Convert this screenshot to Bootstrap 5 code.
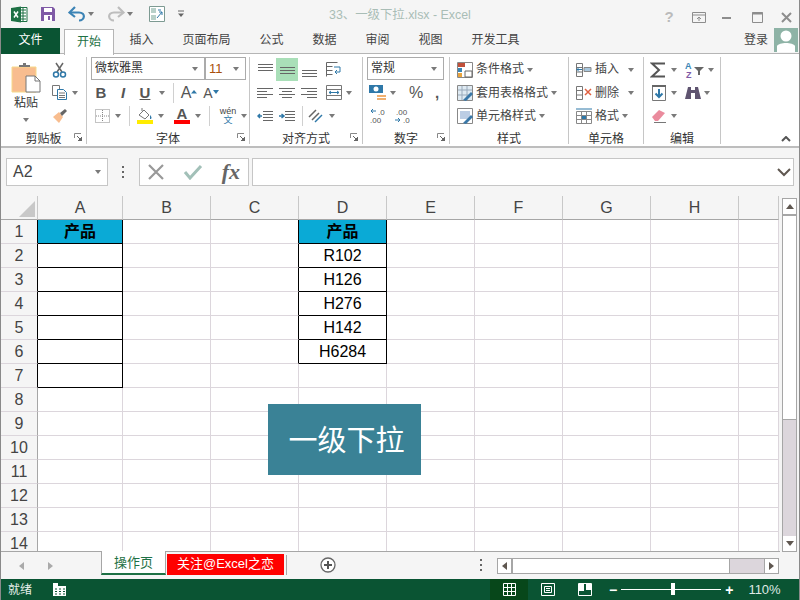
<!DOCTYPE html>
<html lang="zh"><head><meta charset="utf-8"><title>33、一级下拉.xlsx - Excel</title>
<link href="https://cdn.jsdelivr.net/npm/bootstrap@5.3.0/dist/css/bootstrap.min.css" rel="stylesheet">
<style>
html,body{margin:0;height:600px;overflow:hidden;background:#f5f5f5}
body{font:12px/1.2 "Liberation Sans","Noto Sans CJK SC",sans-serif;color:#444}
.xwin{width:800px;height:600px;border-left:1px solid #8a8a8a;border-right:1px solid #8a8a8a;position:relative;overflow:hidden}
svg{display:block;flex:none}
.titlebar{height:28px;flex:none;position:relative}
.qat{padding-left:10px}
.doctitle{position:absolute;left:328px;top:7px;font-size:12.4px;color:#a9bdb6;white-space:nowrap;line-height:16px}
.winbtns{position:absolute;right:7px;top:6px}
.tabrow{height:26px;flex:none;border-bottom:1px solid #b5b5b5}
.rtab{padding:0 14.5px;line-height:25px;height:26px;white-space:nowrap;color:#444;font-size:12px}
.rtab-file{width:59px;padding:0;text-align:center;background:#0a5433;color:#fff;margin-right:4px}
.rtab-on{width:50px;padding:0;text-align:center;background:#fff;border:1px solid #b5b5b5;border-bottom:0;color:#1e7145;line-height:24px;margin-right:1px;margin-top:1px;height:26px;z-index:1;position:relative}
.login{margin-left:auto;padding-right:6px;line-height:25px}
.avatar{width:24px;height:24px;background:#8eb3a6;margin-right:1px;overflow:hidden}
.ribbon{height:94px;flex:none;background:#fff;border-bottom:2px solid #bdbdbd}
.grp{height:87px;margin-top:3px;border-right:1px solid #c6c6c6;position:relative;flex:none}
.g1{width:86px}.g2{width:163px}.g3{width:113px}.g4{width:87px}.g5{width:119px}.g6{width:75px}.g7{width:77px}
.tools{height:70px;padding-top:1px}
.glabel{height:17px;line-height:25px;text-align:center;color:#333;white-space:nowrap}
.launch{position:absolute;right:4px;bottom:3px}
.trow{height:23.3px;display:flex;align-items:center}
.ce{display:flex;align-items:center;justify-content:center;flex:none;height:22px}
.w4{width:4px}.w5{width:5px}.w6{width:6px}.w7{width:7px}.w8{width:8px}.w10{width:10px}.w11{width:11px}.w12{width:12px}.w14{width:14px}.w16{width:16px}.w18{width:18px}.w19{width:19px}.w20{width:20px}.w22{width:22px}.w23{width:23px}.w24{width:24px}.w26{width:26px}
.ar{width:0;height:0;border:3.5px solid transparent;border-top:4px solid #7a7a7a;border-bottom:0;display:block;flex:none}
.vsep{width:1px;height:20px;background:#d0d0d0;display:block}
.dd{height:23px;border:1px solid #ababab;display:flex;align-items:center;justify-content:space-between;padding:0 6px 0 3px;background:#fff;color:#333;font-size:12px}
.dfont{width:114px;margin-left:4px;margin-top:-1px}.dsize{width:41px;margin-top:-1px;color:#a8500c;font-size:13px}
.dnum{width:77px;margin-left:4px;margin-top:-1px}
.pastewrap{width:38px;margin-left:6px;padding-top:4px}
.pal{color:#333;font-size:12px;line-height:14px;margin-top:3px}
.txt{color:#444;white-space:nowrap;margin-left:3px}
.letter{font-size:15px;line-height:1;color:#555}
.fbar{height:48px;flex:none;padding:10px 5px 10px 5px}
.namebox{width:102px;height:28px;background:#fff;border:1px solid #c6c6c6;font-size:16px;padding:0 6px;color:#444}
.fdots{width:31px;height:28px}
.fbtns{width:110px;height:28px;background:#fff;border:1px solid #c6c6c6;padding:0 8px 0 7px;margin-right:3px}
.finput{flex:1;height:28px;background:#fff;border:1px solid #c6c6c6;padding-right:2px}
.fxt{font:italic bold 22px/1 "Liberation Serif",serif;color:#666}
.sheetarea{height:356px;flex:none;position:relative}
.sheetclip{width:779px;height:356px;overflow:hidden;border-bottom:1px solid #a6a6a6;position:relative;flex:none}
table.xs{border-collapse:separate;border-spacing:0;table-layout:fixed;width:778px;margin:0}
table.xs td,table.xs th{height:24px;padding:0;border-right:1px solid #dcd6dc;border-bottom:1px solid #dcd6dc;text-align:center;font-size:16px;font-weight:400;line-height:22px;color:#000;background:#fff;overflow:hidden}
table.xs .hd{height:24px;background:#f5f5f5;color:#444;border-right:1px solid #c8c8c8;border-bottom:1px solid #a6a6a6}
table.xs .rh{background:#f5f5f5;color:#444;border-right:1px solid #a6a6a6;border-bottom:1px solid #dcd6dc;font-size:16px}
table.xs .rk{border-right-color:#000}
table.xs .kb{border-right-color:#000;border-bottom-color:#000}
table.xs .kr{border-right-color:#000}
table.xs .cy{background:#0aaad6;font-weight:700;font-size:16px}
.corner{width:0;height:0;border-left:16px solid transparent;border-bottom:16px solid #c8c8c8;margin:2px 2px 0 auto}
.banner{position:absolute;left:267px;top:208px;width:153px;height:71px;padding:4px 0 0 4px;background:#3a8296;color:#fff;font-size:29px;display:flex;align-items:center;justify-content:center}
.vscroll{width:15px;height:354px;margin:2px 0 0 2px;background:#dcd6dc;border:1px solid #a6a6a6;flex:none}
.sbtn{height:15px;background:#fff;display:flex;align-items:center;justify-content:center;flex:none}
.vthumb{height:206px;background:#fff;border-top:2px solid #a6a6a6;border-bottom:1px solid #a6a6a6;flex:none}
.tabsbar{height:27px;flex:none;position:relative}
.navarrows{width:100px;padding:0 30px 0 0}
.stab{height:24px;width:65px;text-align:center;background:#fff;line-height:24px;font-size:13px;color:#1e7145;border-left:1px solid #a6a6a6;border-right:1px solid #a6a6a6;border-bottom:2px solid #1e7145;margin-top:-1px;z-index:1;position:relative}
.stab2{height:21px;width:117px;margin:2px 2px 0 1px;background:#f00;color:#fff;text-align:center;line-height:20px;font-size:13px;white-space:nowrap}
.tsep{width:1px;height:20px;background:#a6a6a6;margin-top:3px}
.addbtn{margin-left:33px;margin-top:5px}
.tdots{margin-left:144px;margin-top:7px}
.hscroll{position:absolute;left:496px;top:6px;width:282px;height:16px;border:1px solid #a6a6a6;background:#dcd6dc}
.hb{width:14px;background:#fff;border-right:1px solid #a6a6a6;display:flex;align-items:center;justify-content:center;flex:none}
.hthumb{width:218px;background:#fff;border-left:1px solid #a6a6a6;border-right:1px solid #a6a6a6;flex:none}
.hfill{flex:1}
.hb2{width:14px;background:#fff;border-left:1px solid #a6a6a6;display:flex;align-items:center;justify-content:center;flex:none}
.statusbar{height:21px;flex:none;background:#0a5433;color:#fff;position:relative}
.stxt{padding-left:7px;width:52px;line-height:20px;color:#e8f0ec}
.vbtn{height:21px;display:flex;align-items:center;justify-content:center;flex:none}
.vb1{width:38px;background:#07471a;margin-left:424px}
.vb2{width:40px}.vb3{width:34px;margin-right:7px}
.slider{width:100px;height:1px;background:#fff;margin:0 4px;position:relative}
.thumbk{position:absolute;left:50px;top:-6px;width:4px;height:12px;background:#fff}
.zoompct{font-size:13px;color:#dfe9e4;margin-left:15px}
.szb{font:700 14px/1 "Liberation Sans",sans-serif;color:#fff}
</style></head><body>
<div class="xwin d-flex flex-column">

<div class="titlebar d-flex align-items-center qat">
 <svg width="17" height="17" viewBox="0 0 17 17"><path d="M6 1.500h10v14H6z" fill="#fff" stroke="#1e7145"/><path d="M10 4h5M10 7h5M10 10h5M10 13h5M12 2v13" stroke="#1e7145"/><path d="M0 2l10-1.500v16L0 15z" fill="#1e7145"/><path d="M3 5.500l4 6M7 5.500l-4 6" stroke="#fff" stroke-width="1.500"/></svg>
 <span class="ce w12"></span>
 <svg width="16" height="16" viewBox="0 0 16 16"><path d="M1 1h12l2 2v12H1z" fill="#7f5aa6"/><path d="M4 2h8v4H4z" fill="#fff"/><path d="M4 9h8v6H4z" fill="#fff"/><path d="M8 10h2v4H8z" fill="#7f5aa6"/></svg>
 <span class="ce w12"></span>
 <svg width="18" height="16" viewBox="0 0 18 16"><path d="M2 6.500h9c7 0 6 8 0 8" fill="none" stroke="#3b83b5" stroke-width="2.200"/><path d="M7 1L1.500 6.500 7 11" fill="none" stroke="#3b83b5" stroke-width="2.200"/></svg>
 <span class="ce w10"><i class="ar"></i></span>
 <span class="ce w11"></span>
 <svg width="18" height="16" viewBox="0 0 18 16"><path d="M16 6.500H7c-7 0-6 8 0 8" fill="none" stroke="#bdbdbd" stroke-width="2.200"/><path d="M11 1l5.500 5.500L11 11" fill="none" stroke="#bdbdbd" stroke-width="2.200"/></svg>
 <span class="ce w10"><i class="ar"></i></span>
 <span class="ce w14"></span>
 <svg width="16" height="16" viewBox="0 0 16 16"><path d="M.5.500h15v15H.500z" fill="#fff" stroke="#7d9a92"/><path d="M2 2h5v5H2zM2 9h5v5H2z" fill="#b8d0c9"/><path d="M8 12l5-6M13 6h-3M13 6v3M9 4h3" stroke="#2f78a8" fill="none"/></svg>
 <span class="ce w12"></span>
 <svg width="8" height="8" viewBox="0 0 8 8"><path d="M1 1h6" stroke="#666"/><path d="M1 3.500h6L4 7z" fill="#666"/></svg>
 <div class="doctitle">33、一级下拉.xlsx - Excel</div>
 <div class="winbtns d-flex align-items-center">
  <span class="ce w22 fw-bold" style="color:#bbb;font-size:15px">?</span>
  <span class="ce w12"></span>
  <svg width="14" height="11" viewBox="0 0 14 11"><path d="M.5.500h13v10H.500zM1 3h12" fill="none" stroke="#8d8d8d"/><path d="M7 9V5M5 7l2-2 2 2" fill="none" stroke="#8d8d8d"/></svg>
  <span class="ce w16"></span>
  <svg width="10" height="10" viewBox="0 0 10 10"><path d="M0 6h9" stroke="#8d8d8d" stroke-width="2"/></svg>
  <span class="ce w20"></span>
  <svg width="11" height="11" viewBox="0 0 11 11"><path d="M.5.500h10v10H.500z" fill="none" stroke="#8d8d8d"/><path d="M0 1.500h11" stroke="#8d8d8d" stroke-width="2"/></svg>
  <span class="ce w18"></span>
  <svg width="11" height="11" viewBox="0 0 11 11"><path d="M1 1l9 9M10 1l-9 9" stroke="#8d8d8d" stroke-width="2"/></svg>
 </div>
</div>

<nav class="tabrow d-flex">
 <div class="rtab rtab-file">文件</div><div class="rtab rtab-on">开始</div>
 <div class="rtab">插入</div><div class="rtab">页面布局</div><div class="rtab">公式</div><div class="rtab">数据</div><div class="rtab">审阅</div><div class="rtab">视图</div><div class="rtab">开发工具</div>
 <div class="login">登录</div>
 <div class="avatar"><svg width="24" height="24" viewBox="0 0 24 24"><circle cx="12" cy="8" r="5.500" fill="#fff"/><path d="M3 24v-6c2-4 16-4 18 0v6z" fill="#fff"/></svg></div>
</nav>

<div class="ribbon d-flex">
 <section class="grp g1">
  <div class="tools d-flex">
   <div class="pastewrap d-flex flex-column align-items-center">
    <svg width="30" height="31" viewBox="0 0 30 31"><path d="M1 5h24v25H1z" fill="#f8bd8f" stroke="#f6d98a"/><path d="M8 5V3h4V1h3v2h4v2z" fill="#777"/><path d="M15 14h9l5 5v11H15z" fill="#fff" stroke="#777"/><path d="M24 14v5h5" fill="none" stroke="#777"/></svg>
    <span class="pal">粘贴</span><i class="ar mt-2"></i>
   </div>
   <div class="d-flex flex-column" style="margin-left:7px">
    <div class="trow"><svg width="15" height="16" viewBox="0 0 15 16"><path d="M4 1l6 9M11 1L5 10" stroke="#666" fill="none" stroke-width="1.500"/><circle cx="4" cy="12.500" r="2.500" fill="none" stroke="#2f78a8" stroke-width="1.500"/><circle cx="11" cy="12.500" r="2.500" fill="none" stroke="#2f78a8" stroke-width="1.500"/></svg></div>
    <div class="trow"><svg width="15" height="15" viewBox="0 0 15 15"><path d="M.5.500h7v10h-7z" fill="#fff" stroke="#777"/><path d="M5.500 4.500h6l3 3v7h-9z" fill="#fff" stroke="#2f78a8"/><path d="M7 8h6M7 10.500h6M7 12.500h6" stroke="#777"/></svg><span class="ce w16"><i class="ar"></i></span></div>
    <div class="trow"><svg width="16" height="15" viewBox="0 0 16 15"><path d="M1 9l6-5 4 5-4 6z" fill="#f8bd8f"/><path d="M8 5l5-4 2 2-5 5z" fill="#666"/></svg></div>
   </div>
  </div>
  <div class="glabel">剪贴板</div>
  <svg class="launch" width="8" height="8" viewBox="0 0 8 8"><path d="M.5 5V.500H7" fill="none" stroke="#888"/><path d="M3 3l5 5M8 4v4H4z" fill="#666" stroke="#666"/></svg>
 </section>
 <section class="grp g2">
  <div class="tools">
   <div class="d-flex"><div class="dd dfont"><span>微软雅黑</span><i class="ar"></i></div><div class="dd dsize"><span>11</span><i class="ar"></i></div></div>
   <div class="trow" style="margin-top:1px;padding-left:3px">
    <span class="ce w22 fw-bold letter">B</span><span class="ce w22 fst-italic letter fw-bold">I</span><span class="ce w22 letter text-decoration-underline fw-bold">U</span><span class="ce w12"><i class="ar"></i></span><span class="ce w10"><b class="vsep"></b></span>
    <span class="ce w22"><span class="letter" style="font-size:16px">A</span><svg width="6" height="6" viewBox="0 0 6 6"><path d="M3 0l3 3.500H0z" fill="#2f78a8"/></svg></span>
    <span class="ce w22"><span class="letter" style="font-size:14px">A</span><svg width="6" height="6" viewBox="0 0 6 6"><path d="M3 4L0 0h6z" fill="#2f78a8"/></svg></span>
   </div>
   <div class="trow" style="padding-left:3px">
    <span class="ce w24"><svg width="15" height="14" viewBox="0 0 15 14"><path d="M.5.500h14v13H.500zM7.500 1v12M1 7h13" fill="none" stroke="#888" stroke-dasharray="1 1"/></svg></span><span class="ce w8"><i class="ar"></i></span><span class="ce w14"><b class="vsep"></b></span>
    <span class="ce w18"><svg width="16" height="17" viewBox="0 0 16 17"><path d="M2 8l5-5 5 5-4 4z" fill="#fff" stroke="#777"/><path d="M5 4V1" stroke="#777"/><path d="M13 8c2 2 2 4 0 4z" fill="#2f78a8"/><path d="M0 13h16v4H0z" fill="#ffec00"/></svg></span><span class="ce w14"><i class="ar"></i></span><span class="ce w6"></span>
    <span class="ce w16 flex-column"><span class="letter fw-bold" style="line-height:13px">A</span><b class="d-block" style="width:16px;height:4px;background:#f00"></b></span><span class="ce w16"><i class="ar"></i></span><span class="ce w6"><b class="vsep"></b></span>
    <span class="ce w22 flex-column" style="margin-left:5px;font-size:9px;line-height:9px"><span>wén</span><span style="color:#2f78a8">文</span></span><span class="ce w10"><i class="ar"></i></span>
   </div>
  </div>
  <div class="glabel">字体</div>
  <svg class="launch" width="8" height="8" viewBox="0 0 8 8"><path d="M.5 5V.500H7" fill="none" stroke="#888"/><path d="M3 3l5 5M8 4v4H4z" fill="#666" stroke="#666"/></svg>
 </section>
 <section class="grp g3">
  <div class="tools" style="padding-left:4px">
   <div class="trow">
    <span class="ce w22"><svg width="15" height="14" viewBox="0 0 15 14"><path d="M0 1.500h15M0 4.500h15M0 7.500h15" stroke="#666"/></svg></span>
    <span class="ce w22" style="background:#a9dfb8;height:23px"><svg width="15" height="14" viewBox="0 0 15 14"><path d="M0 4.500h15M0 7.500h15M0 10.500h15" stroke="#666"/></svg></span>
    <span class="ce w22"><svg width="15" height="14" viewBox="0 0 15 14"><path d="M0 7.500h15M0 10.500h15M0 13.500h15" stroke="#666"/></svg></span>
    <span class="ce w6"></span><span class="ce w16"><svg width="16" height="15" viewBox="0 0 16 15"><path d="M.5.500h11M.5 4.500h6M.5 8.500h6M.5 12.500h6" stroke="#666"/><path d="M.5.500v14" stroke="#666"/><path d="M8 5h6v5H9M11 8l-2 2 2 2" stroke="#2f78a8" fill="none"/></svg></span>
   </div>
   <div class="trow">
    <span class="ce w22"><svg width="16" height="12" viewBox="0 0 16 12"><path d="M0 1.500h16M0 4.500h10M0 7.500h16M0 10.500h10" stroke="#666"/></svg></span>
    <span class="ce w22"><svg width="16" height="12" viewBox="0 0 16 12"><path d="M0 1.500h16M3 4.500h10M0 7.500h16M3 10.500h10" stroke="#666"/></svg></span>
    <span class="ce w22"><svg width="16" height="12" viewBox="0 0 16 12"><path d="M0 1.500h16M6 4.500h10M0 7.500h16M6 10.500h10" stroke="#666"/></svg></span>
    <span class="ce w6"></span><span class="ce w16"><svg width="16" height="15" viewBox="0 0 16 15"><path d="M.5.500h15v14H.500z" fill="none" stroke="#777"/><path d="M.5 4.500h15M.5 10.500h15" stroke="#777"/><path d="M3 7.500h10M5 6L3 7.500 5 9M11 6l2 1.500L11 9" stroke="#2f78a8" fill="none"/></svg></span><span class="ce w14"><i class="ar"></i></span>
   </div>
   <div class="trow">
    <span class="ce w22"><svg width="16" height="12" viewBox="0 0 16 12"><path d="M6 1.500h10M6 4.500h10M6 7.500h10M6 10.500h10" stroke="#666"/><path d="M5 6H1M3 4L1 6l2 2" stroke="#2f78a8" fill="none" stroke-width="1.500"/></svg></span>
    <span class="ce w22"><svg width="16" height="12" viewBox="0 0 16 12"><path d="M6 1.500h10M6 4.500h10M6 7.500h10M6 10.500h10" stroke="#666"/><path d="M0 6h4M2.500 4L5 6 2.500 8" stroke="#2f78a8" fill="none" stroke-width="1.500"/></svg></span>
    <span class="ce w8"><b class="vsep"></b></span>
    <span class="ce w20"><svg width="16" height="16" viewBox="0 0 16 16"><path d="M1 9l7-7M4 12l7-7" stroke="#666" stroke-width="1.500"/><path d="M7 14l7-7" stroke="#2f78a8" stroke-width="1.500"/></svg></span><span class="ce w12"><i class="ar"></i></span>
   </div>
  </div>
  <div class="glabel">对齐方式</div>
  <svg class="launch" width="8" height="8" viewBox="0 0 8 8"><path d="M.5 5V.500H7" fill="none" stroke="#888"/><path d="M3 3l5 5M8 4v4H4z" fill="#666" stroke="#666"/></svg>
 </section>
 <section class="grp g4">
  <div class="tools">
   <div class="dd dnum"><span>常规</span><i class="ar"></i></div>
   <div class="trow" style="padding-left:6px;margin-top:1px">
    <svg width="17" height="17" viewBox="0 0 17 17"><path d="M0 1h14v8H0z" fill="#2f78a8"/><circle cx="7" cy="5" r="2.500" fill="#fff"/><path d="M8 11h9v2H8zM8 14h9v2H8z" fill="#f0b070"/></svg>
    <span class="ce w14"><i class="ar"></i></span><span class="ce w4"></span>
    <span class="ce w24 letter" style="font-size:16px">%</span><span class="ce w18 fw-bold letter">,</span>
   </div>
   <div class="trow" style="padding-left:7px">
    <svg width="15" height="16" viewBox="0 0 15 16"><path d="M6 3H1M3 1L1 3l2 2" stroke="#2f78a8" fill="none"/><text x="8" y="7" font-size="8" fill="#555" font-family="Liberation Sans">.0</text><text x="0" y="15" font-size="8" fill="#555" font-family="Liberation Sans">.00</text></svg>
    <span class="ce w10"></span>
    <svg width="15" height="16" viewBox="0 0 15 16"><text x="1" y="7" font-size="8" fill="#555" font-family="Liberation Sans">.00</text><path d="M0 12h5M3 10l2 2-2 2" stroke="#2f78a8" fill="none"/><text x="8" y="15" font-size="8" fill="#555" font-family="Liberation Sans">.0</text></svg>
   </div>
  </div>
  <div class="glabel">数字</div>
  <svg class="launch" width="8" height="8" viewBox="0 0 8 8"><path d="M.5 5V.500H7" fill="none" stroke="#888"/><path d="M3 3l5 5M8 4v4H4z" fill="#666" stroke="#666"/></svg>
 </section>
 <section class="grp g5">
  <div class="tools" style="padding-left:7px">
   <div class="trow"><svg width="16" height="16" viewBox="0 0 16 16"><path d="M.5.500h15v15H.500z" fill="#fff" stroke="#888"/><path d="M1 1h7v4H1z" fill="#c0503a"/><path d="M1 6h4v4H1z" fill="#3a86b5"/><path d="M1 11h4v4H1z" fill="#e9a33d"/><path d="M8 9h7v6H8z" fill="#fff" stroke="#666"/></svg><span class="txt">条件格式</span><span class="ce w12"><i class="ar"></i></span></div>
   <div class="trow"><svg width="16" height="16" viewBox="0 0 16 16"><path d="M.5.500h15v15H.500z" fill="#dfeaf2" stroke="#888"/><path d="M5 1v14M10 1v14M1 5h14M1 10h14" stroke="#9ab"/><path d="M6 15l8-8 2 2-7 7z" fill="#3a78a8"/></svg><span class="txt">套用表格格式</span><span class="ce w12"><i class="ar"></i></span></div>
   <div class="trow"><svg width="16" height="16" viewBox="0 0 16 16"><path d="M.5.500h15v15H.500z" fill="#fff" stroke="#888"/><path d="M3 3h10v8H3z" fill="#bccde4"/><path d="M6 15l8-8 2 2-7 7z" fill="#3a78a8"/></svg><span class="txt">单元格样式</span><span class="ce w12"><i class="ar"></i></span></div>
  </div>
  <div class="glabel">样式</div>
 </section>
 <section class="grp g6">
  <div class="tools" style="padding-left:7px">
   <div class="trow"><svg width="16" height="16" viewBox="0 0 16 16"><path d="M.5 1.500h6v13h-6zM.5 5.500h6M.5 10h6" fill="none" stroke="#777"/><path d="M6 7.500H1M3 5.500l-2 2 2 2" stroke="#2f78a8" fill="none"/><path d="M8 5.500h7v4H8z" fill="#a8c6dc" stroke="#888"/></svg><span class="txt">插入</span><span class="ce w24"><i class="ar"></i></span></div>
   <div class="trow"><svg width="16" height="16" viewBox="0 0 16 16"><path d="M.5 1.500h6v13h-6zM.5 5.500h6M.5 10h6" fill="none" stroke="#777"/><path d="M9 4l6 6M15 4l-6 6" stroke="#e06040" stroke-width="1.500"/></svg><span class="txt">删除</span><span class="ce w24"><i class="ar"></i></span></div>
   <div class="trow"><svg width="16" height="16" viewBox="0 0 16 16"><path d="M0 1h16" stroke="#2f78a8"/><path d="M.5 3.500h15v12H.500zM5.500 3v12M10.500 3v12M1 7.500h14M1 11.500h14" fill="none" stroke="#888"/><path d="M6 8h4v3H6z" fill="#2f78a8"/></svg><span class="txt">格式</span><span class="ce w12"><i class="ar"></i></span></div>
  </div>
  <div class="glabel">单元格</div>
 </section>
 <section class="grp g7">
  <div class="tools" style="padding-left:6px">
   <div class="trow"><svg width="17" height="16" viewBox="0 0 17 16"><path d="M15 1.500H2l7 6.500-7 6.500h13" fill="none" stroke="#555" stroke-width="2"/></svg><span class="ce w14"><i class="ar"></i></span><span class="ce w4"></span>
    <svg width="21" height="18" viewBox="0 0 21 18"><text x="0" y="8" font-size="9" font-weight="700" fill="#3a86b5" font-family="Liberation Sans">A</text><text x="1" y="17" font-size="9" font-weight="700" fill="#7f5aa6" font-family="Liberation Sans">Z</text><path d="M9 6h10l-4 4v4h-2v-4z" fill="#666"/></svg><span class="ce w10"><i class="ar"></i></span></div>
   <div class="trow"><span class="ce w18"><svg width="14" height="16" viewBox="0 0 14 16"><path d="M.5.500h13v15H.500z" fill="#fff" stroke="#777"/><path d="M0 0h14v2H0z" fill="#666"/><path d="M7 4v8M3.500 8.500L7 12l3.500-3.500" stroke="#2f78a8" stroke-width="2" fill="none"/></svg></span><span class="ce w12"><i class="ar"></i></span><span class="ce w5"></span>
    <svg width="16" height="14" viewBox="0 0 16 14"><path d="M3 1h3v3h4V1h3l3 12h-6V7H6v6H0z" fill="#5f5470"/></svg><span class="ce w12"><i class="ar"></i></span></div>
   <div class="trow"><span class="ce w18"><svg width="16" height="14" viewBox="0 0 16 14"><path d="M1 8l7-7 6 3-7 8H4z" fill="#ea8b9d"/><path d="M3 13.500h12" stroke="#777"/></svg></span><span class="ce w12"><i class="ar"></i></span></div>
  </div>
  <div class="glabel">编辑</div>
 </section>
 <div class="flex-grow-1 d-flex align-items-end justify-content-end" style="padding:0 8px 4px 0"><svg width="10" height="6" viewBox="0 0 10 6"><path d="M1 5l4-4 4 4" fill="none" stroke="#555" stroke-width="2"/></svg></div>
</div>

<div class="fbar d-flex">
 <div class="namebox d-flex align-items-center justify-content-between"><span>A2</span><i class="ar"></i></div>
 <div class="fdots d-flex align-items-center justify-content-center"><svg width="3" height="12" viewBox="0 0 3 12"><path d="M0 0h2v2H0zM0 5h2v2H0zM0 10h2v2H0z" fill="#666"/></svg></div>
 <div class="fbtns d-flex align-items-center justify-content-between">
  <svg width="18" height="16" viewBox="0 0 18 16"><path d="M2 1l14 14M16 1L2 15" stroke="#999" stroke-width="2.200"/></svg>
  <svg width="20" height="16" viewBox="0 0 20 16"><path d="M2 8l5 6L18 2" fill="none" stroke="#a2c0b8" stroke-width="3"/></svg>
  <span class="fxt">fx</span>
 </div>
 <div class="finput d-flex align-items-center justify-content-end"><svg width="14" height="9" viewBox="0 0 14 9"><path d="M1 1l6 6 6-6" fill="none" stroke="#5f5750" stroke-width="2"/></svg></div>
</div>

<div class="sheetarea d-flex">
 <div class="sheetclip">
 <table class="xs"><colgroup><col style="width:37px"><col style="width:85px"><col style="width:88px"><col style="width:88px"><col style="width:88px"><col style="width:88px"><col style="width:88px"><col style="width:88px"><col style="width:88px"><col style="width:40px"></colgroup>
 <tr><th class="hd"><div class="corner"></div></th><th class="hd">A</th><th class="hd">B</th><th class="hd">C</th><th class="hd">D</th><th class="hd">E</th><th class="hd">F</th><th class="hd">G</th><th class="hd">H</th><th class="hd"></th></tr>
 <tr><td class="rh rk">1</td><td class="cy kb">产品</td><td></td><td class="kr"></td><td class="cy kb">产品</td><td></td><td></td><td></td><td></td><td></td></tr>
 <tr><td class="rh rk">2</td><td class="kb"></td><td></td><td class="kr"></td><td class="kb">R102</td><td></td><td></td><td></td><td></td><td></td></tr>
 <tr><td class="rh rk">3</td><td class="kb"></td><td></td><td class="kr"></td><td class="kb">H126</td><td></td><td></td><td></td><td></td><td></td></tr>
 <tr><td class="rh rk">4</td><td class="kb"></td><td></td><td class="kr"></td><td class="kb">H276</td><td></td><td></td><td></td><td></td><td></td></tr>
 <tr><td class="rh rk">5</td><td class="kb"></td><td></td><td class="kr"></td><td class="kb">H142</td><td></td><td></td><td></td><td></td><td></td></tr>
 <tr><td class="rh rk">6</td><td class="kb"></td><td></td><td class="kr"></td><td class="kb">H6284</td><td></td><td></td><td></td><td></td><td></td></tr>
 <tr><td class="rh rk">7</td><td class="kb"></td><td></td><td></td><td></td><td></td><td></td><td></td><td></td><td></td></tr>
 <tr><td class="rh">8</td><td></td><td></td><td></td><td></td><td></td><td></td><td></td><td></td><td></td></tr>
 <tr><td class="rh">9</td><td></td><td></td><td></td><td></td><td></td><td></td><td></td><td></td><td></td></tr>
 <tr><td class="rh">10</td><td></td><td></td><td></td><td></td><td></td><td></td><td></td><td></td><td></td></tr>
 <tr><td class="rh">11</td><td></td><td></td><td></td><td></td><td></td><td></td><td></td><td></td><td></td></tr>
 <tr><td class="rh">12</td><td></td><td></td><td></td><td></td><td></td><td></td><td></td><td></td><td></td></tr>
 <tr><td class="rh">13</td><td></td><td></td><td></td><td></td><td></td><td></td><td></td><td></td><td></td></tr>
 <tr><td class="rh">14</td><td></td><td></td><td></td><td></td><td></td><td></td><td></td><td></td><td></td></tr>
 </table>
 <div class="banner">一级下拉</div>
 </div>
 <div class="vscroll d-flex flex-column">
  <div class="sbtn"><svg width="8" height="5" viewBox="0 0 8 5"><path d="M4 0l4 5H0z" fill="#5f5750"/></svg></div>
  <div class="vthumb"></div>
  <div class="flex-grow-1"></div>
  <div class="sbtn"><svg width="8" height="5" viewBox="0 0 8 5"><path d="M4 5L0 0h8z" fill="#5f5750"/></svg></div>
 </div>
</div>

<div class="tabsbar d-flex">
 <div class="navarrows d-flex align-items-center justify-content-center gap-4"><svg width="5" height="8" viewBox="0 0 5 8"><path d="M5 0v8L0 4z" fill="#aaa"/></svg><svg width="5" height="8" viewBox="0 0 5 8"><path d="M0 0v8l5-4z" fill="#aaa"/></svg></div>
 <div class="stab">操作页</div>
 <div class="stab2">关注@Excel之恋</div>
 <div class="tsep"></div>
 <div class="addbtn"><svg width="16" height="16" viewBox="0 0 16 16"><circle cx="8" cy="8" r="7" fill="#fff" stroke="#666" stroke-width="1.300"/><path d="M8 4v8M4 8h8" stroke="#555" stroke-width="2"/></svg></div>
 <div class="tdots"><svg width="3" height="12" viewBox="0 0 3 12"><path d="M0 0h2v2H0zM0 5h2v2H0zM0 10h2v2H0z" fill="#666"/></svg></div>
 <div class="hscroll d-flex">
  <div class="hb"><svg width="5" height="8" viewBox="0 0 5 8"><path d="M5 0v8L0 4z" fill="#5f5750"/></svg></div>
  <div class="hthumb"></div><div class="hfill"></div>
  <div class="hb2"><svg width="5" height="8" viewBox="0 0 5 8"><path d="M0 0v8l5-4z" fill="#5f5750"/></svg></div>
 </div>
</div>

<footer class="statusbar d-flex align-items-center">
 <div class="stxt">就绪</div>
 <svg width="13" height="13" viewBox="0 0 13 13"><path d="M0 3h13v10H0z" fill="#fff"/><path d="M0 0h5v4H0z" fill="#fff"/><path d="M2 6h2M6 6h2M10 6h2M2 8.500h2M6 8.500h2M10 8.500h2M2 11h2M6 11h2M10 11h2" stroke="#0a5433"/></svg>
 <div class="vbtn vb1"><svg width="13" height="13" viewBox="0 0 13 13"><path d="M.5.500h12v12H.500zM4.500 1v12M8.500 1v12M1 4.500h12M1 8.500h12" fill="none" stroke="#fff"/></svg></div>
 <div class="vbtn vb2"><svg width="14" height="13" viewBox="0 0 14 13"><path d="M.5.500h13v12H.500z" fill="none" stroke="#fff"/><path d="M3.500 3.500h7v6h-7zM5 5.500h4M5 7.500h4" fill="none" stroke="#fff"/></svg></div>
 <div class="vbtn vb3"><svg width="14" height="13" viewBox="0 0 14 13"><path d="M.5.500h13v12H.500z" fill="none" stroke="#fff"/><path d="M1 1h5v7H1zM8 1h5v6H8z" fill="#fff"/></svg></div>
 <span class="szb">−</span>
 <div class="slider"><i class="thumbk"></i></div>
 <span class="szb">+</span>
 <span class="zoompct">110%</span>
</footer>
</div>
<script src="https://cdn.jsdelivr.net/npm/bootstrap@5.3.0/dist/js/bootstrap.bundle.min.js"></script>
</body></html>
